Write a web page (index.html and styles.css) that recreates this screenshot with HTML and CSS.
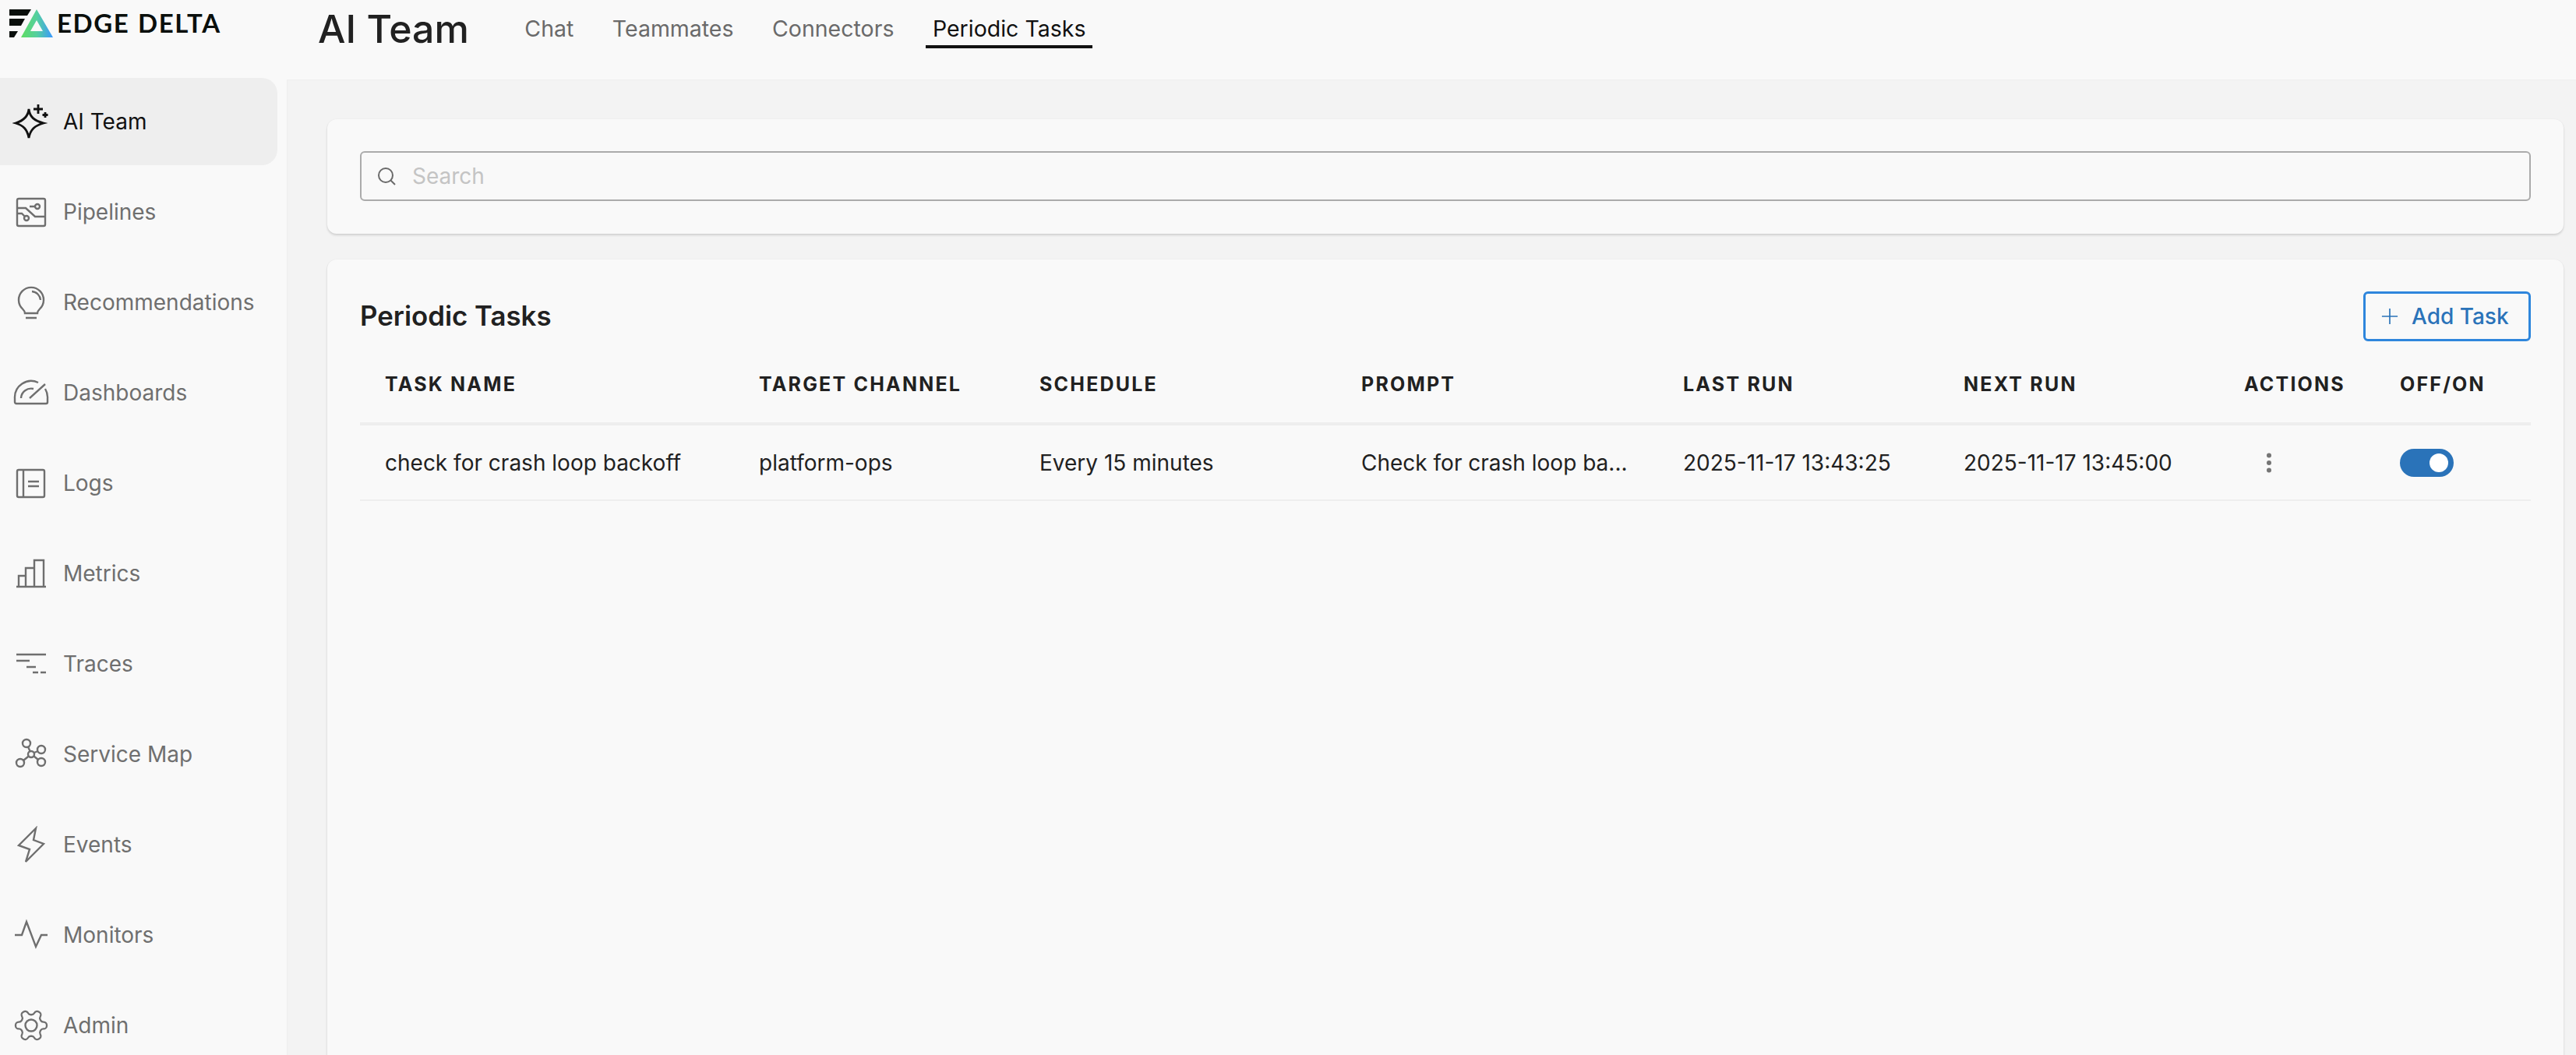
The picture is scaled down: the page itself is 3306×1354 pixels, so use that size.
FILE: index.html
```html
<!DOCTYPE html>
<html lang="en">
<head>
<meta charset="utf-8">
<title>AI Team - Periodic Tasks</title>
<link rel="stylesheet" href="styles.css">
</head>
<body>
<div class="app">
  <aside class="sidebar">
    <div class="brand">
      <svg class="brand-mark" viewBox="0 0 60 40" width="60" height="40" aria-hidden="true">
        <defs>
          <linearGradient id="lg" x1="0" y1="0" x2="1" y2="0">
            <stop offset="0" stop-color="#5fdd62"/>
            <stop offset="0.5" stop-color="#55cfa0"/>
            <stop offset="1" stop-color="#3a98ff"/>
          </linearGradient>
        </defs>
        <path d="M0 2h28l-5 8H0zM0 14h20l-5 9H0zM0 30h11l-5 8H0z" fill="#0a0f0c"/>
        <path fill-rule="evenodd" d="M35 2L56 38H15zM35 16L27 30H43z" fill="url(#lg)"/>
      </svg>
      <span class="brand-name">EDGE DELTA</span>
    </div>
    <nav class="nav">
      <a class="nav-item active">
        <svg class="nav-icon" viewBox="0 0 48 48" aria-hidden="true"><path d="M21 8C22 18 28 23 40 26C29 29 23 34 21 45C19 34 14 29 4 26C14 23 20 18 21 8Z"/><path d="M33 2V14M27 8H39M42 12V19M38.500 15.500H45.500" /></svg>
        <span>AI Team</span>
      </a>
      <a class="nav-item">
        <svg class="nav-icon" viewBox="0 0 48 48" aria-hidden="true"><rect x="6" y="7" width="36" height="35" rx="2"/><circle cx="32" cy="17" r="3"/><circle cx="18" cy="32" r="3"/><path d="M6 19H17L29 30H42M29 17H22M6 26H12L16 30"/></svg>
        <span>Pipelines</span>
      </a>
      <a class="nav-item">
        <svg class="nav-icon" viewBox="0 0 48 48" aria-hidden="true"><path d="M13 32.500A16 16 0 1 1 35 32.500C33 34.500 32 36 32 38H16C16 36 15 34.500 13 32.500Z"/><path d="M25 10A12 12 0 0 1 36 21M17 44H31"/></svg>
        <span>Recommendations</span>
      </a>
      <a class="nav-item">
        <svg class="nav-icon" viewBox="0 0 48 48" aria-hidden="true"><path d="M3 36V31A21 21 0 0 1 33 11M42 19A21 21 0 0 1 45 31V36A2 2 0 0 1 43 38H5A2 2 0 0 1 3 36M11 31A13 13 0 0 1 27 19M22 31L42 13"/></svg>
        <span>Dashboards</span>
      </a>
      <a class="nav-item">
        <svg class="nav-icon" viewBox="0 0 48 48" aria-hidden="true"><rect x="6" y="7" width="35" height="35" rx="2"/><path d="M14 7V42M20 22H34M20 28H34"/></svg>
        <span>Logs</span>
      </a>
      <a class="nav-item">
        <svg class="nav-icon" viewBox="0 0 48 48" aria-hidden="true"><path d="M5 41H43M8 41V27H17M17 41V17H28V41M28 41V7H40V41"/></svg>
        <span>Metrics</span>
      </a>
      <a class="nav-item">
        <svg class="nav-icon" viewBox="0 0 48 48" aria-hidden="true"><path d="M5 12H43M5 20H22M18 28H30M26 35H33M36 35H43"/></svg>
        <span>Traces</span>
      </a>
      <a class="nav-item">
        <svg class="nav-icon" viewBox="0 0 48 48" aria-hidden="true"><circle cx="24" cy="24" r="4"/><circle cx="18" cy="10" r="5"/><circle cx="37" cy="18" r="5"/><circle cx="37" cy="34" r="5"/><circle cx="10" cy="35" r="5"/><path d="M20 14.500L22.500 20M28 22L32.500 20M27.500 26.500L33 31M20.800 26.500L14 32"/></svg>
        <span>Service Map</span>
      </a>
      <a class="nav-item">
        <svg class="nav-icon" viewBox="0 0 48 48" aria-hidden="true"><path d="M30 3L8 25L22 30L17 46L40 23L27 18Z"/></svg>
        <span>Events</span>
      </a>
      <a class="nav-item">
        <svg class="nav-icon" viewBox="0 0 48 48" aria-hidden="true"><path d="M3 24H12L18 7L30 39L37 24H45"/></svg>
        <span>Monitors</span>
      </a>
      <a class="nav-item">
        <svg class="nav-icon" viewBox="0 0 48 48" aria-hidden="true"><circle cx="24" cy="24" r="7.500"/><path class="gear" transform="rotate(90 24 24) scale(2)" d="M12.220 2h-.44a2 2 0 0 0-2 2v.18a2 2 0 0 1-1 1.730l-.43.25a2 2 0 0 1-2 0l-.15-.08a2 2 0 0 0-2.730.73l-.22.38a2 2 0 0 0 .73 2.730l.15.1a2 2 0 0 1 1 1.720v.51a2 2 0 0 1-1 1.740l-.15.09a2 2 0 0 0-.73 2.730l.22.38a2 2 0 0 0 2.730.73l.15-.08a2 2 0 0 1 2 0l.43.25a2 2 0 0 1 1 1.730V20a2 2 0 0 0 2 2h.44a2 2 0 0 0 2-2v-.18a2 2 0 0 1 1-1.730l.43-.25a2 2 0 0 1 2 0l.15.08a2 2 0 0 0 2.730-.73l.22-.39a2 2 0 0 0-.73-2.730l-.15-.08a2 2 0 0 1-1-1.740v-.5a2 2 0 0 1 1-1.740l.15-.09a2 2 0 0 0 .73-2.730l-.22-.38a2 2 0 0 0-2.730-.73l-.15.08a2 2 0 0 1-2 0l-.43-.25a2 2 0 0 1-1-1.730V4a2 2 0 0 0-2-2z"/></svg>
        <span>Admin</span>
      </a>
    </nav>
  </aside>
  <div class="main">
    <header class="topbar">
      <h1 class="page-title">AI Team</h1>
      <div class="tabs">
        <a class="tab">Chat</a>
        <a class="tab">Teammates</a>
        <a class="tab">Connectors</a>
        <a class="tab tab-active">Periodic Tasks</a>
      </div>
    </header>
    <main class="content">
      <section class="card search-card">
        <div class="search">
          <svg class="search-icon" viewBox="0 0 24 24" aria-hidden="true"><circle cx="11" cy="11" r="9"/><path d="M17.500 17.500L23 23"/></svg>
          <span class="placeholder">Search</span>
        </div>
      </section>
      <section class="card table-card">
        <div class="table-head">
          <h2 class="card-title">Periodic Tasks</h2>
          <button class="add-btn">
            <svg class="plus" viewBox="0 0 24 24" aria-hidden="true"><path d="M12 1V23M1 12H23"/></svg>
            <span>Add Task</span>
          </button>
        </div>
        <div class="row row-head">
          <div>TASK NAME</div><div>TARGET CHANNEL</div><div>SCHEDULE</div><div>PROMPT</div><div>LAST RUN</div><div>NEXT RUN</div><div>ACTIONS</div><div>OFF/ON</div>
        </div>
        <div class="row row-body">
          <div>check for crash loop backoff</div>
          <div>platform-ops</div>
          <div>Every 15 minutes</div>
          <div>Check for crash loop ba...</div>
          <div>2025-11-17 13:43:25</div>
          <div>2025-11-17 13:45:00</div>
          <div class="kebab-cell"><svg class="kebab" viewBox="0 0 8 26" aria-hidden="true"><circle cx="4" cy="3.500" r="3"/><circle cx="4" cy="13" r="3"/><circle cx="4" cy="22.500" r="3"/></svg></div>
          <div><span class="toggle"><span class="knob"></span></span></div>
        </div>
      </section>
    </main>
  </div>
</div>
</body>
</html>
```
FILE: styles.css
```css
* { box-sizing: border-box; }
html, body { margin: 0; height: 100%; }
body {
  font-family: Inter, "Liberation Sans", sans-serif;
  background: #f9f9f9;
  color: #212121;
  overflow: hidden;
}
.app { display: flex; height: 1354px; overflow: hidden; }
.sidebar { width: 368px; flex: none; background: #f9f9f9; }
.brand { height: 100px; padding: 9px 0 0 12px; display: flex; align-items: flex-start; gap: 1px; }
.brand-mark { flex: none; margin-top: 1px; }
.brand-name {
  font-family: Lato, Inter, sans-serif;
  font-weight: 700;
  font-size: 33px;
  line-height: 40px;
  letter-spacing: 1.600px;
  word-spacing: 1px;
  color: #0a0f0c;
  white-space: nowrap;
}
.nav { display: flex; flex-direction: column; gap: 4px; width: 356px; }
.nav-item {
  height: 112px;
  display: flex;
  align-items: center;
  gap: 17px;
  padding-left: 16px;
  font-size: 28px;
  color: #6f6f6f;
  border-radius: 0 20px 20px 0;
}
.nav-item.active { background: #eeeeee; color: #111111; }
.nav-icon {
  width: 48px; height: 48px; flex: none;
  fill: none; stroke: currentColor; stroke-width: 2.400;
}
.active .nav-icon { stroke-width: 2.800; }
.nav-icon .gear { stroke-width: 1.150; }
.main { flex: 1; min-width: 0; display: flex; flex-direction: column; overflow: hidden; }
.topbar {
  height: 102px; flex: none;
  display: flex; align-items: flex-start;
  padding-left: 40px;
}
.page-title {
  margin: 7px 63px 0 0; font-size: 50px; line-height: 60px; font-weight: 500; color: #212121;
}
.tabs { display: flex; gap: 32.500px; margin-top: 17px; }
.tab {
  font-size: 28.500px; line-height: 40px; color: #6a6a6a;
  padding: 0 8.500px; height: 45px;
}
.tab-active { color: #111111; border-bottom: 4px solid #111111; }
.content {
  flex: 1; min-height: 0;
  background: #f3f3f3;
  padding: 50px 16px 0 51px;
  display: flex; flex-direction: column; gap: 33px;
  border-top: 1px solid #efefef;
  border-left: 1px solid #efefef;
  overflow: hidden;
}
.card {
  background: #f9f9f9;
  border-radius: 12px;
  box-shadow: 0 2px 3px rgba(0,0,0,.14), 0 0 2px rgba(0,0,0,.05);
  padding: 0 42px;
}
.search-card { height: 147px; padding-top: 41px; flex: none; }
.search {
  height: 64px;
  border: 2px solid #ababab;
  border-radius: 6px;
  display: flex; align-items: center; gap: 21px;
  padding-left: 20px;
}
.search-icon { width: 24px; height: 24px; fill: none; stroke: #6a6a6a; stroke-width: 2; flex: none; }
.placeholder { font-size: 28px; color: #c4c4c4; }
.table-card { flex: none; height: 1100px; }
.table-head { display: flex; justify-content: space-between; align-items: center; padding-top: 41px; }
.card-title { margin: 0 0 2px; font-size: 34.800px; font-weight: 600; color: #212121; }
.add-btn {
  width: 215px; height: 64px;
  border: 3px solid #2e86dc; border-radius: 6px;
  background: transparent;
  display: flex; align-items: center; justify-content: flex-start; gap: 17px;
  padding: 0 0 0 20px;
  font: 500 28px Inter, sans-serif;
  color: #2a73b9;
}
.plus { width: 22px; height: 22px; fill: none; stroke: #2a73b9; stroke-width: 1.800; flex: none; }
.row {
  display: grid;
  grid-template-columns: 480px 360px 413px 413px 360px 360px 200px 1fr;
  align-items: center;
}
.row > div { padding-left: 32px; white-space: nowrap; }
.row-head {
  height: 108px;
  padding-top: 5px;
  border-bottom: 4px solid #eeeeee;
  font-size: 25px; font-weight: 700; letter-spacing: 2.200px; color: #212121;
}
.row-body {
  height: 97px;
  border-bottom: 2px solid #eeeeee;
  font-size: 28px; color: #212121;
}
.kebab-cell { display: flex; align-items: center; }
.kebab { width: 8px; height: 26px; fill: #757575; margin-left: 28px; }
.toggle {
  display: flex; align-items: center; justify-content: flex-end;
  width: 69px; height: 36px; border-radius: 18px;
  background: #2a73b9; padding-right: 7px;
}
.knob { width: 24px; height: 24px; border-radius: 50%; background: #fff; }
```
